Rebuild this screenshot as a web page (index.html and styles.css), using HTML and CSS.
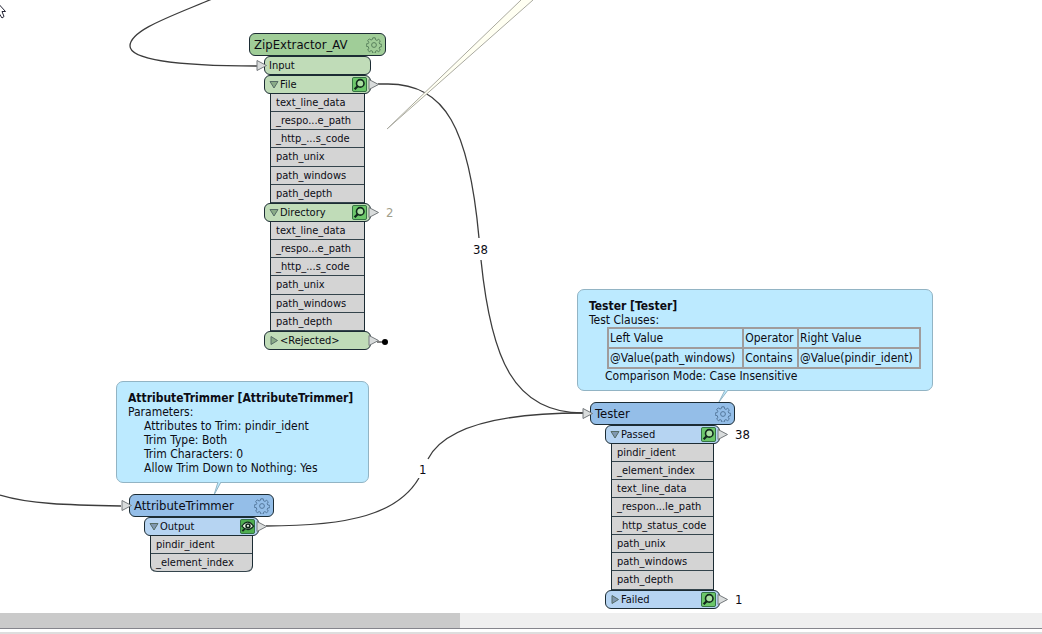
FILE: index.html
```html
<!DOCTYPE html>
<html lang="en">
<head>
<meta charset="utf-8">
<title>Workspace</title>
<link rel="stylesheet" href="styles.css">
</head>
<body>
<svg class="defs" aria-hidden="true">
  <symbol id="gear" viewBox="0 0 16 16">
    <path d="M6.8 .8h2.4l.4 2 1.3.6 1.8-1.100 1.600 1.600-1.100 1.800.6 1.300 2 .4v2.200l-2 .4-.6 1.300 1.100 1.800-1.600 1.600-1.800-1.100-1.300.6-.4 2H6.800l-.4-2-1.300-.6-1.800 1.100-1.600-1.600 1.100-1.800L2.200 9.600l-2-.4V7l2-.4.6-1.200-1.100-1.900 1.600-1.600 1.800 1.100 1.300-.6z" fill="none" stroke="currentColor"/>
    <circle cx="8" cy="8" r="2.400" fill="none" stroke="currentColor"/>
  </symbol>
  <symbol id="lens" viewBox="0 0 16 16">
    <rect x=".5" y=".5" width="15" height="15" rx="1.500" fill="#6cc76a" stroke="#2c6a3c"/>
    <circle cx="8.800" cy="6.800" r="4" fill="#a9e0a0" stroke="#10281c" stroke-width="1.700"/>
    <path d="M6 9.800 2.800 13" stroke="#10281c" stroke-width="2.400"/>
  </symbol>
  <symbol id="eye" viewBox="0 0 16 16">
    <rect x=".5" y=".5" width="15" height="15" rx="1.500" fill="#4fae50" stroke="#2c6a3c"/>
    <path d="M2 7.500Q8.500-1 14.500 7.500 8.500 15 2 7.500z" fill="#e9f7e4" stroke="#10281c" stroke-width="1.300"/>
    <circle cx="8.500" cy="7.400" r="2.900" fill="#10281c"/>
    <circle cx="8.500" cy="7.200" r="1.200" fill="#e9f7e4"/>
    <path d="M5 10.500 2.500 13" stroke="#10281c" stroke-width="2"/>
  </symbol>
  <symbol id="arrow" viewBox="0 0 12 13">
    <path d="M1 1.500 10.500 6.500 1 11.500z" fill="#d9dcdc" stroke="#75797c"/>
  </symbol>
  <symbol id="open" viewBox="0 0 10 9">
    <path d="M1 1.500h8L5 8z" fill="currentColor" stroke="#566c66"/>
  </symbol>
  <symbol id="closed" viewBox="0 0 10 9">
    <path d="M2 .5v8L8.500 4.500z" fill="currentColor" stroke="#566c66"/>
  </symbol>
</svg>

<main class="canvas">
  <svg class="wires" aria-hidden="true">
    <g class="wire">
      <path d="M212-1C172 16 130 30 130 46C130 59 174 66 257 66"/>
      <path d="M378 84H388C445 84 469 128 479 238"/>
      <path d="M481 260C491 358 513 413 583 413"/>
      <path d="M0 495C30 504 66 505 121 506"/>
      <path d="M266 526C350 526 398 514 419 478"/>
      <path d="M428 459C446 424 508 413 583 413"/>
      <path d="M377 342h8"/>
    </g>
    <circle cx="385" cy="342" r="3"/>
    <path class="note-tail" d="M521 0 387 129 533 0"/>
  </svg>

  <span class="count on-wire count-file">38</span>
  <span class="count on-wire count-output">1</span>

  <section class="node green zip">
    <header class="title">ZipExtractor_AV<button class="icon gear" aria-label="Parameters"><svg><use href="#gear"/></svg></button></header>
    <div class="ports">
      <div class="port plain"><svg class="arrow in"><use href="#arrow"/></svg>Input</div>
      <div class="port"><button class="icon toggle" aria-label="Collapse File"><svg><use href="#open"/></svg></button>File<button class="icon inspect" aria-label="Inspect File"><svg><use href="#lens"/></svg></button><svg class="arrow out"><use href="#arrow"/></svg></div>
      <ul class="attrs"><li>text_line_data</li><li>_respo...e_path</li><li>_http_...s_code</li><li>path_unix</li><li>path_windows</li><li>path_depth</li></ul>
      <div class="port"><button class="icon toggle" aria-label="Collapse Directory"><svg><use href="#open"/></svg></button>Directory<button class="icon inspect" aria-label="Inspect Directory"><svg><use href="#lens"/></svg></button><svg class="arrow out"><use href="#arrow"/></svg><span class="count beside dim">2</span></div>
      <ul class="attrs"><li>text_line_data</li><li>_respo...e_path</li><li>_http_...s_code</li><li>path_unix</li><li>path_windows</li><li>path_depth</li></ul>
      <div class="port"><button class="icon toggle" aria-label="Expand Rejected"><svg><use href="#closed"/></svg></button>&lt;Rejected&gt;<svg class="arrow out"><use href="#arrow"/></svg></div>
    </div>
  </section>

  <aside class="summary trimmer-note">
    <h2>AttributeTrimmer [AttributeTrimmer]</h2>
    <p>Parameters:</p>
    <ul class="params"><li>Attributes to Trim: pindir_ident</li><li>Trim Type: Both</li><li>Trim Characters: 0</li><li>Allow Trim Down to Nothing: Yes</li></ul>
    <svg class="tail" viewBox="0 0 12 14"><path d="M6 0 2 13 9 0"/></svg>
  </aside>

  <section class="node blue trimmer">
    <header class="title"><svg class="arrow in"><use href="#arrow"/></svg>AttributeTrimmer<button class="icon gear" aria-label="Parameters"><svg><use href="#gear"/></svg></button></header>
    <div class="ports">
      <div class="port"><button class="icon toggle" aria-label="Collapse Output"><svg><use href="#open"/></svg></button>Output<button class="icon inspect" aria-label="Inspect Output"><svg><use href="#eye"/></svg></button><svg class="arrow out"><use href="#arrow"/></svg></div>
      <ul class="attrs last"><li>pindir_ident</li><li>_element_index</li></ul>
    </div>
  </section>

  <aside class="summary tester-note">
    <h2>Tester [Tester]</h2>
    <p>Test Clauses:</p>
    <table class="clauses">
      <thead><tr><th>Left Value</th><th>Operator</th><th>Right Value</th></tr></thead>
      <tbody><tr><td>@Value(path_windows)</td><td>Contains</td><td>@Value(pindir_ident)</td></tr></tbody>
    </table>
    <p class="mode">Comparison Mode: Case Insensitive</p>
    <svg class="tail" viewBox="0 0 12 14"><path d="M7 0 1 12 10 0"/></svg>
  </aside>

  <section class="node blue tester">
    <header class="title"><svg class="arrow in"><use href="#arrow"/></svg>Tester<button class="icon gear" aria-label="Parameters"><svg><use href="#gear"/></svg></button></header>
    <div class="ports">
      <div class="port"><button class="icon toggle" aria-label="Collapse Passed"><svg><use href="#open"/></svg></button>Passed<button class="icon inspect" aria-label="Inspect Passed"><svg><use href="#lens"/></svg></button><svg class="arrow out"><use href="#arrow"/></svg><span class="count beside">38</span></div>
      <ul class="attrs"><li>pindir_ident</li><li>_element_index</li><li>text_line_data</li><li>_respon...le_path</li><li>_http_status_code</li><li>path_unix</li><li>path_windows</li><li>path_depth</li></ul>
      <div class="port"><button class="icon toggle" aria-label="Expand Failed"><svg><use href="#closed"/></svg></button>Failed<button class="icon inspect" aria-label="Inspect Failed"><svg><use href="#lens"/></svg></button><svg class="arrow out"><use href="#arrow"/></svg><span class="count beside">1</span></div>
    </div>
  </section>

  <svg class="cursor" viewBox="0 0 8 20" aria-hidden="true"><path d="M-5 0 5.500 11.500H2l2 5-2 1.500-2.500-4" fill="#fff" stroke="#223"/></svg>
</main>
<div class="scrollbar"><div class="thumb"></div></div>
<footer class="edge"></footer>
</body>
</html>
```
FILE: styles.css
```css
* { box-sizing: border-box; }
body {
  margin: 0;
  min-height: 100vh;
  display: flex;
  flex-direction: column;
  background: #fff;
  color: #0c0c14;
  font: 12px/14px Tahoma, "DejaVu Sans Condensed", "DejaVu Sans", sans-serif;
}
h2, p, ul { margin: 0; padding: 0; }
ul { list-style: none; }
.defs { position: absolute; width: 0; height: 0; }

.canvas { position: relative; flex: 1; min-height: 612px; overflow: hidden; }
.wires { position: absolute; inset: 0; width: 100%; height: 100%; }
.wire { fill: none; stroke: #3c3c3c; stroke-width: 1.3; }
.note-tail { fill: #fffff2; stroke: #aaaaa0; }

/* Transformer nodes */
.node { position: absolute; }
.zip { left: 249px; top: 33px; width: 137px; }
.trimmer { left: 129px; top: 494px; width: 145px; }
.tester { left: 590px; top: 402px; width: 145px; }
.green { --head: #a0cd98; --port: #c0dcb8; --mark: #8aab88; --gear: #58805c; }
.blue { --head: #94bee8; --port: #b6d4f2; --mark: #8098b0; --gear: #54789c; }

.title {
  position: relative;
  display: flex;
  align-items: center;
  justify-content: space-between;
  height: 23px;
  padding: 0 3px 0 4px;
  border: 1px solid #1c2c34;
  border-radius: 6px;
  background: var(--head);
  font-size: 13px;
}
.ports { padding: 0 15px; }
.port {
  position: relative;
  display: flex;
  align-items: center;
  gap: 1px;
  height: 19px;
  padding: 0 3px 0 4px;
  border: 1px solid #1c2c34;
  border-radius: 6px;
  background: var(--port);
  font-size: 11px;
}
.attrs {
  margin: 0 6px;
  border: solid #1c2c34;
  border-width: 0 1px;
  background: #d4d4d4;
  font-size: 11px;
}
.attrs li {
  height: 18px;
  padding-left: 5px;
  border-bottom: 1px solid #34444c;
  line-height: 18px;
  white-space: nowrap;
}
.attrs li:nth-child(4n) { height: 19px; }
.attrs.last, .attrs.last li:last-child { border-radius: 0 0 6px 6px; }

.icon { flex: none; padding: 0; border: 0; background: none; }
.icon svg { display: block; width: 100%; height: 100%; }
.gear { width: 16px; height: 16px; color: var(--gear); }
.toggle { width: 10px; height: 9px; color: var(--mark); }
.inspect { width: 15px; height: 15px; margin-left: auto; }
.arrow { position: absolute; top: 2px; width: 12px; height: 13px; }
.arrow.in { left: -9px; }
.arrow.out { right: -10px; }
.title .arrow.in { top: 4px; }

.count { font-size: 13px; }
.beside { position: absolute; left: calc(100% + 16px); }
.dim { color: #a0a08c; }
.on-wire { position: absolute; padding: 0 2px; background: #fff; line-height: 16px; }
.count-file { left: 471px; top: 242px; }
.count-output { left: 417px; top: 462px; }

/* Summary annotations */
.summary {
  position: absolute;
  padding: 9px 11px;
  border: 1px solid #92b4c4;
  border-radius: 7px;
  background: #bceaff;
  white-space: nowrap;
}
.summary h2 { font-size: 12px; line-height: 14px; }
.trimmer-note { left: 116px; top: 381px; width: 253px; height: 102px; }
.tester-note { left: 577px; top: 289px; width: 356px; height: 102px; }
.params { padding-left: 16px; }
.clauses {
  width: 314px;
  margin-left: 18px;
  border-collapse: collapse;
}
.clauses th, .clauses td {
  height: 20px;
  padding: 0 1px;
  border: 2px solid #a09c9c;
  font-weight: normal;
  text-align: left;
}
.mode { padding-left: 16px; }
.tail { position: absolute; top: 100%; width: 12px; height: 14px; fill: #bceaff; stroke: #92b4c4; }
.trimmer-note .tail { left: 95px; }
.tester-note .tail { left: 140px; }

.cursor { position: absolute; left: 0; top: 0; width: 8px; height: 20px; }

.scrollbar { height: 15px; background: #efefef; }
.thumb { width: 44.15%; height: 100%; background: #cacaca; }
.edge { height: 6px; border-top: 1px solid #85858c; border-bottom: 2px solid #dedede; }
```
